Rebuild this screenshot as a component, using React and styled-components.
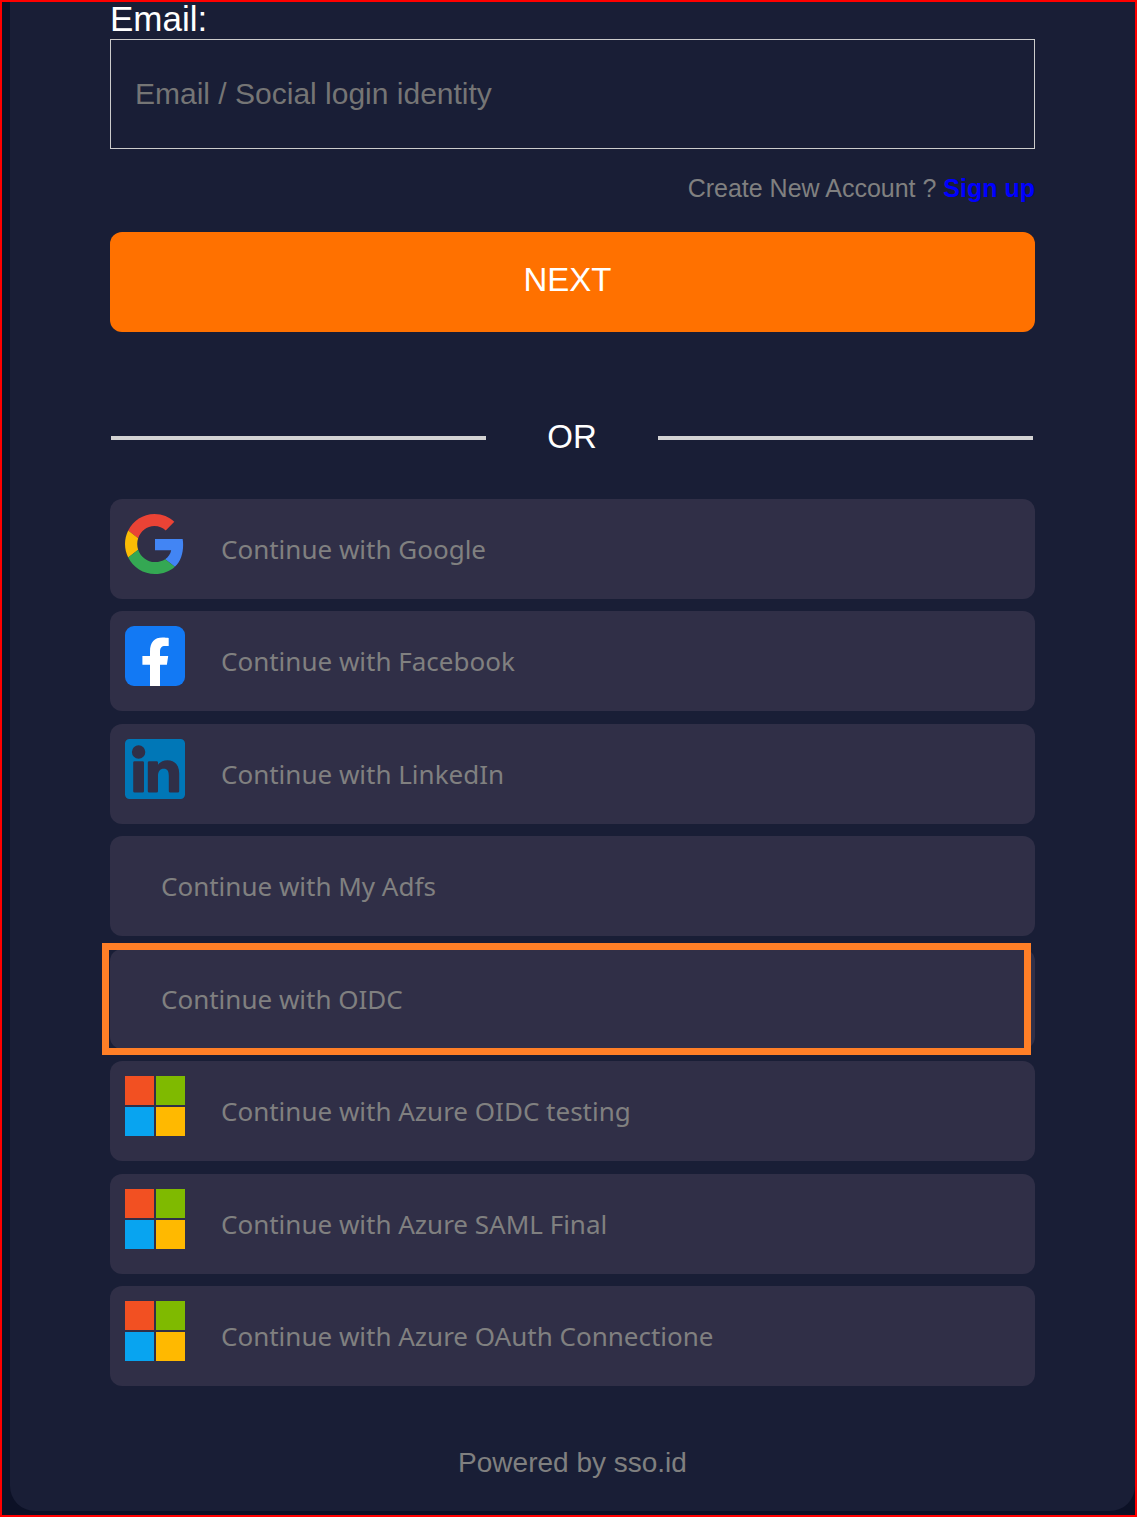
import React from "react";
import styled, { createGlobalStyle } from "styled-components"

const GlobalStyle = createGlobalStyle`
  * {
    box-sizing: border-box;
  }
  body {
    margin: 0;
    font-family: "Liberation Sans", Arial, sans-serif;
    background-color: #0c1126;
  }
`

const Page = styled.div`
  display: flex;
  flex-direction: column;
  min-height: 100vh;
  padding: 0 0 4px 8px;
  border: 2px solid #ff0000;
  background-color: #0c1126;
`

const Card = styled.main`
  flex: 1;
  padding: 0 100px;
  border-radius: 0 0 25px 25px;
  background-color: #191e36;
`

const Label = styled.label`
  display: block;
  padding-bottom: 4px;
  font-size: 35px;
  line-height: 33px;
  color: #ffffff;
`

const TextBox = styled.input`
  display: block;
  width: 100%;
  height: 110px;
  padding: 0 24px;
  border: 1px solid #cccccc;
  border-radius: 0;
  background-color: transparent;
  font-family: inherit;
  font-size: 30px;
  color: #ffffff;
  &::placeholder {
    color: #757575;
    opacity: 1;
  }
`

const SignUp = styled.p`
  margin: 23px 0 28px;
  font-size: 25px;
  line-height: 32px;
  text-align: right;
  color: #808080;
  a {
    font-weight: bold;
    color: #0000ff;
    text-decoration: none;
  }
`

const NextButton = styled.button`
  display: block;
  width: 100%;
  height: 100px;
  padding: 0 10px 4px 0;
  border: 0;
  border-radius: 12px;
  background-color: #ff7100;
  font-family: inherit;
  font-size: 33px;
  color: #ffffff;
  cursor: pointer;
`

const Divider = styled.div`
  display: flex;
  align-items: center;
  margin: 86px 2px 41px 1px;
  font-size: 33px;
  line-height: 38px;
  color: #ffffff;
  &::before,
  &::after {
    content: "";
    flex: 1;
    height: 4px;
    background-color: #d3d3d3;
  }
  span {
    width: 172px;
    padding-bottom: 2px;
    text-align: center;
  }
`

const Providers = styled.ul`
  margin: 0;
  padding: 0;
  list-style: none;
`

const Provider = styled.li`
  position: relative;
  margin-bottom: 12px;
  &:nth-child(even) {
    margin-bottom: 13px;
  }
  &:last-child {
    margin-bottom: 0;
  }
`

const ProviderButton = styled.button`
  display: flex;
  align-items: center;
  gap: 36px;
  width: 100%;
  height: 100px;
  padding: 0 15px 0 ${props => props.$hasLogo ? "15px" : "51px"};
  border: 0;
  border-radius: 12px;
  background-color: #302f47;
  font-family: "Noto Sans", sans-serif;
  font-size: 26px;
  color: #808080;
  text-align: left;
  cursor: pointer;
  svg {
    flex: none;
    align-self: flex-start;
    width: 60px;
    height: 60px;
    margin-top: 15px;
  }
`

const Highlight = styled.div`
  position: absolute;
  top: -6px;
  right: 4px;
  bottom: -6px;
  left: -8px;
  border: 7px solid #ff7f27;
  pointer-events: none;
`

const Footer = styled.footer`
  margin-top: 60px;
  padding-bottom: 32px;
  font-size: 28px;
  line-height: 33px;
  text-align: center;
  color: #808080;
`

const GoogleLogo = () => (
  <svg viewBox="0 0 48 48" aria-hidden="true">
    <path fill="#ea4335" d="M23.6 9.5c3.54 0 6.5 1.22 9 3.6l6.85-6.85C35.3 2.38 30 0 23.6 0 14.3 0 6.51 5.38 2.56 13.22l7.98 6.19C12.43 13.72 17.4 9.5 23.6 9.5z" />
    <path fill="#4285f4" d="M46.5 24.55c0-1.57-.15-3.09-.38-4.55H24v9.02h12.94c-.58 2.96-2.26 5.48-4.78 7.18l7.73 6c4.51-4.18 6.61-10.36 6.61-17.65z" />
    <path fill="#fbbc05" d="M10.53 28.59c-.48-1.45-.76-2.99-.76-4.59s.27-3.14.76-4.59l-7.98-6.19C.92 16.46 0 20.12 0 24c0 3.88.92 7.54 2.56 10.78l7.97-6.19z" />
    <path fill="#34a853" d="M24 48c6.48 0 11.93-2.13 15.89-5.81l-7.73-6c-2.15 1.45-4.92 2.3-8.16 2.3-6.26 0-11.57-4.22-13.47-9.91l-7.98 6.19C6.51 42.62 14.62 48 24 48z" />
  </svg>
)

const FacebookLogo = () => (
  <svg viewBox="0 0 60 60" aria-hidden="true">
    <rect width="60" height="60" rx="9" fill="#1279f4" />
    <path fill="#ffffff" d="M25 60V38.8H17.4V30H25V25.5C25 16 29.4 11.4 37.6 11.4c2.4 0 4.6.2 6.1.6V20h-3.6C36.5 20 35 21.8 35 25.8V30h8.2l-1.3 8.8H35V60z" />
  </svg>
)

const LinkedInLogo = () => (
  <svg viewBox="0 0 60 60" aria-hidden="true">
    <path
      fill="#0077b7"
      fillRule="evenodd"
      d="M4.5 0h51A4.5 4.5 0 0 1 60 4.5v51a4.5 4.5 0 0 1-4.5 4.5h-51A4.5 4.5 0 0 1 0 55.5v-51A4.5 4.5 0 0 1 4.5 0z
        M13.6 6.3a6.7 6.7 0 1 0 0 13.4a6.7 6.7 0 0 0 0-13.4z
        M9.6 22.2h8a1.4 1.4 0 0 1 1.4 1.4v28.6a1.4 1.4 0 0 1-1.4 1.4h-8a1.4 1.4 0 0 1-1.4-1.4V23.6a1.4 1.4 0 0 1 1.4-1.4z
        M24.2 22.2h7.4a1.4 1.4 0 0 1 1.4 1.4v2.2C35 22.8 38.2 21.2 42.4 21.2C50 21.2 54.2 26.3 54.2 34.5v17.7a1.4 1.4 0 0 1-1.4 1.4h-7.6a1.4 1.4 0 0 1-1.4-1.4V37C43.8 32.3 42.4 29.8 38.8 29.8C34.9 29.8 33 32.5 33 37v15.2a1.4 1.4 0 0 1-1.4 1.4h-7.4a1.4 1.4 0 0 1-1.4-1.4V23.6a1.4 1.4 0 0 1 1.4-1.4z"
    />
  </svg>
)

const MicrosoftLogo = () => (
  <svg viewBox="0 0 60 60" aria-hidden="true">
    <rect width="29" height="29" fill="#f25022" />
    <rect x="31" width="29" height="29" fill="#7fba00" />
    <rect y="31" width="29" height="29" fill="#08a4f0" />
    <rect x="31" y="31" width="29" height="29" fill="#ffb900" />
  </svg>
)

const providers = [
  { name: "Google", logo: GoogleLogo },
  { name: "Facebook", logo: FacebookLogo },
  { name: "LinkedIn", logo: LinkedInLogo },
  { name: "My Adfs" },
  { name: "OIDC", highlighted: true },
  { name: "Azure OIDC testing", logo: MicrosoftLogo },
  { name: "Azure SAML Final", logo: MicrosoftLogo },
  { name: "Azure OAuth Connectione", logo: MicrosoftLogo },
]

class App extends React.Component{
  constructor(props){
    super(props)
    this.state = {
      email: ""
    }
  }

  render(){
    return(
      <Page>
        <GlobalStyle />
        <Card>
          <form onSubmit={(e)=>{e.preventDefault()}}>
            <Label htmlFor="email">Email:</Label>
            <TextBox
              id="email"
              type="text"
              placeholder="Email / Social login identity"
              value={this.state.email}
              onChange={(e)=>{this.setState({email: e.target.value})}}
            />
            <SignUp>Create New Account ? <a href="#signup">Sign up</a></SignUp>
            <NextButton type="submit">NEXT</NextButton>
          </form>
          <Divider><span>OR</span></Divider>
          <Providers>
            {providers.map(({ name, logo: Logo, highlighted }) => (
              <Provider key={name}>
                <ProviderButton type="button" $hasLogo={Boolean(Logo)}>
                  {Logo ? <Logo /> : null}
                  <span>Continue with {name}</span>
                </ProviderButton>
                {highlighted ? <Highlight /> : null}
              </Provider>
            ))}
          </Providers>
          <Footer>Powered by sso.id</Footer>
        </Card>
      </Page>
    )
  }

}

export default App;
